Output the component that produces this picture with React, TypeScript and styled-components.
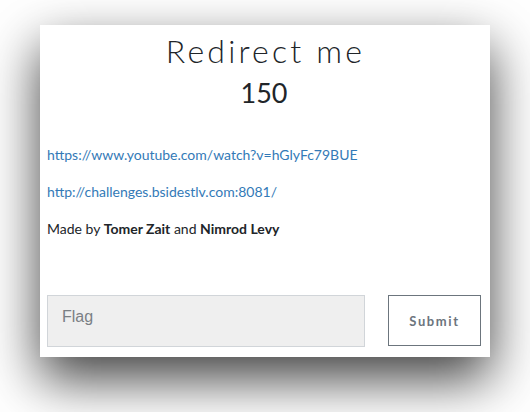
import React from "react";
import styled, { createGlobalStyle } from "styled-components";

const GlobalStyle = createGlobalStyle`
  html, body {
    margin: 0;
    padding: 0;
    background: #ffffff;
  }
  body {
    font-family: Lato, "Open Sans", sans-serif;
    color: #212529;
  }
  * { box-sizing: border-box; }
`;

const Page = styled.div`
  padding: 25px 40px 0 40px;
  width: 530px;
  min-height: 412px;
`;

const Card = styled.div`
  width: 450px;
  height: 332px;
  background: #ffffff;
  box-shadow: 0 22px 50px rgba(0, 0, 0, 0.75);
  display: flex;
  flex-direction: column;
  padding: 7px 9px 10px 7px;
`;

const Header = styled.div`
  display: flex;
  flex-direction: column;
  align-items: center;
`;

const Title = styled.h3`
  margin: 0;
  font-family: Lato, sans-serif;
  font-weight: 300;
  font-size: 32px;
  line-height: 1.2;
  letter-spacing: 3.2px;
  padding-left: 3px;
  color: #212529;
`;

const Points = styled.h4`
  margin: 7px 0 0 0;
  font-family: Lato, sans-serif;
  font-weight: 400;
  font-size: 27px;
  line-height: 1.2;
  color: #212529;
`;

const Description = styled.div`
  margin-top: 34px;
  font-size: 14px;
  line-height: 1.5;
`;

const Para = styled.p`
  margin: 0 0 16px 0;
`;

const Link = styled.a`
  color: #337ab7;
  text-decoration: none;
`;

const Form = styled.form`
  margin-top: auto;
  display: flex;
  align-items: flex-start;
  gap: 23px;
`;

const FlagInput = styled.input`
  width: 318px;
  height: 52px;
  padding: 12px 14px 20px 14px;
  background: #efefef;
  border: 1px solid #d1d5d9;
  border-radius: 0;
  font-family: "Liberation Sans", Arial, sans-serif;
  font-size: 16px;
  color: #495057;
  outline: none;
  &::placeholder {
    color: #7a7f85;
  }
`;

const SubmitButton = styled.button`
  width: 93px;
  height: 51px;
  background: #ffffff;
  border: 1px solid #6c757d;
  border-radius: 0;
  font-family: Lato, sans-serif;
  font-weight: 700;
  font-size: 13px;
  letter-spacing: 1.6px;
  color: #6c757d;
  cursor: pointer;
  padding: 0;
`;

export default function App() {
  return (
    <>
      <GlobalStyle />
      <Page>
        <Card>
          <Header>
            <Title>Redirect me</Title>
            <Points>150</Points>
          </Header>
          <Description>
            <Para>
              <Link href="#">https://www.youtube.com/watch?v=hGlyFc79BUE</Link>
            </Para>
            <Para>
              <Link href="#">http://challenges.bsidestlv.com:8081/</Link>
            </Para>
            <Para>
              Made by <b>Tomer Zait</b> and <b>Nimrod Levy</b>
            </Para>
          </Description>
          <Form onSubmit={(e) => e.preventDefault()}>
            <FlagInput placeholder="Flag" />
            <SubmitButton type="submit">Submit</SubmitButton>
          </Form>
        </Card>
      </Page>
    </>
  );
}
